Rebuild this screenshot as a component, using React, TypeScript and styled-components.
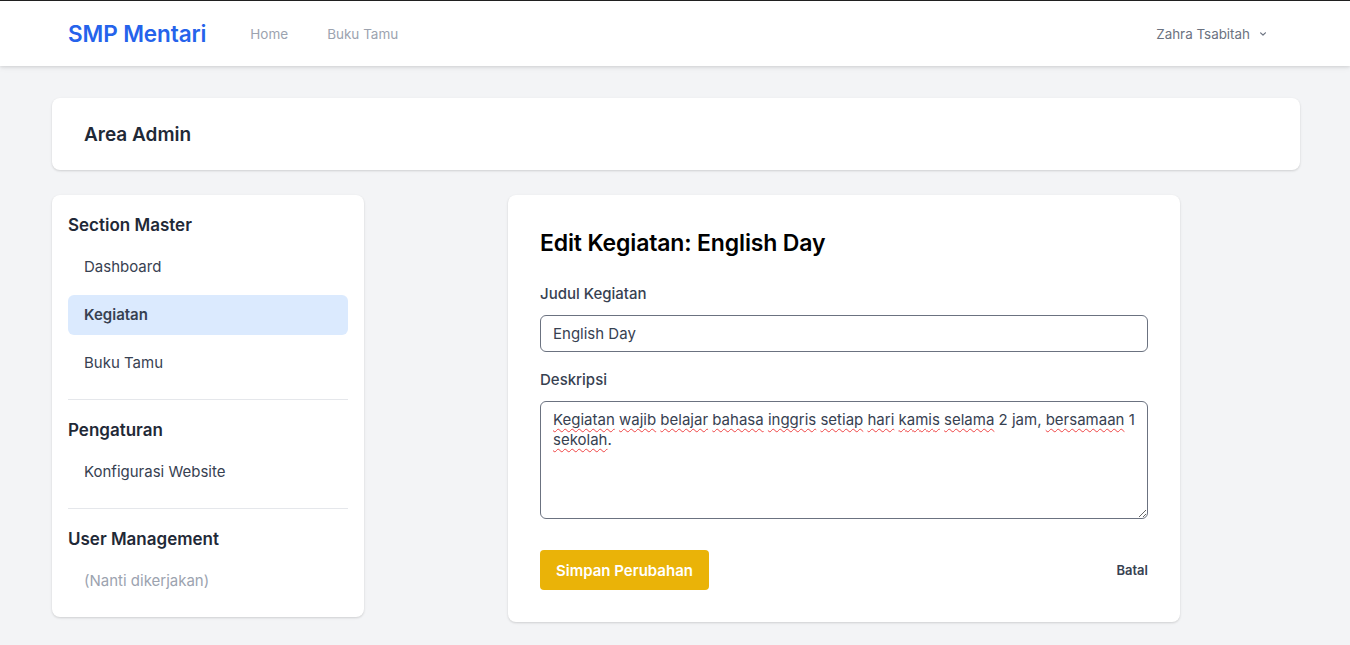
import React from "react";
import styled, { createGlobalStyle } from "styled-components";

const FONT = `"Inter", "Noto Sans", sans-serif`;

const Global = createGlobalStyle`
  html, body { margin: 0; padding: 0; }
  body {
    background: #f3f4f6;
    font-family: ${FONT};
    color: #111827;
    -webkit-font-smoothing: antialiased;
  }
  * { box-sizing: border-box; }
`;

const Page = styled.div`
  min-height: 645px;
  border-top: 1px solid #222;
  background: #f3f4f6;
`;

const Nav = styled.nav`
  height: 65px;
  background: #fff;
  box-shadow: 0 1px 3px rgba(0,0,0,0.1), 0 2px 6px rgba(0,0,0,0.06);
  position: relative;
`;

const NavInner = styled.div`
  max-width: 1280px;
  margin: 0 auto;
  height: 100%;
  padding: 0 32px 0 33px;
  display: flex;
  align-items: center;
`;

const Logo = styled.a`
  font-size: 22.5px;
  font-weight: 600;
  color: #2563eb;
  text-decoration: none;
  letter-spacing: -0.1px;
`;

const NavLinks = styled.div`
  display: flex;
  gap: 39px;
  margin-left: 44px;
`;

const NavLink = styled.a`
  font-size: 13.5px;
  color: #9ca3af;
  font-weight: 400;
  text-decoration: none;
`;

const UserMenu = styled.button`
  margin-left: auto;
  margin-right: 14px;
  display: flex;
  align-items: center;
  gap: 7px;
  background: none;
  border: 0;
  font-family: ${FONT};
  font-size: 13.4px;
  font-weight: 400;
  color: #6b7280;
  padding: 0;
`;

const Container = styled.main`
  max-width: 1280px;
  margin: 0 auto;
  padding: 32px 15px 24px 17px;
`;

const Card = styled.div`
  background: #fff;
  border-radius: 8px;
  box-shadow: 0 1px 3px rgba(0,0,0,0.1), 0 1px 2px rgba(0,0,0,0.06);
`;

const HeaderCard = styled(Card)`
  height: 72px;
  padding: 0 32px;
  display: flex;
  align-items: center;
`;

const PageTitle = styled.h2`
  margin: 0;
  font-size: 19px;
  font-weight: 600;
  color: #1f2937;
`;

const Layout = styled.div`
  display: grid;
  grid-template-columns: 312px 1fr;
  gap: 24px;
  margin-top: 25px;
  align-items: start;
`;

const Sidebar = styled(Card)`
  padding: 16px;
`;

const SectionTitle = styled.h3`
  margin: 0 0 8px;
  font-size: 17px;
  line-height: 28px;
  font-weight: 600;
  color: #1f2937;
`;

const MenuList = styled.div`
  display: flex;
  flex-direction: column;
  gap: 8px;
`;

const MenuItem = styled.a<{ $active?: boolean; $muted?: boolean }>`
  display: block;
  height: 40px;
  line-height: 40px;
  padding: 0 16px;
  border-radius: 6px;
  font-size: 15px;
  text-decoration: none;
  background: ${(p) => (p.$active ? "#dbeafe" : "transparent")};
  color: ${(p) => (p.$muted ? "#9ca3af" : "#374151")};
  font-weight: ${(p) => (p.$active ? 600 : 400)};
`;

const Divider = styled.hr`
  border: 0;
  border-top: 1px solid #e5e7eb;
  margin: 16px 0;
`;

const MainCol = styled.div`
  display: flex;
  justify-content: center;
`;

const FormCard = styled(Card)`
  width: 672px;
  padding: 32px;
`;

const FormTitle = styled.h1`
  margin: 0 0 25px;
  font-size: 23px;
  line-height: 32px;
  font-weight: 600;
  letter-spacing: -0.15px;
  color: #000;
`;

const Field = styled.div`
  display: flex;
  flex-direction: column;
  margin-bottom: 18px;
`;

const Label = styled.label`
  font-size: 15px;
  line-height: 20px;
  font-weight: 500;
  color: #374151;
  margin-bottom: 11px;
`;

const Input = styled.input`
  height: 37px;
  width: 100%;
  border: 1px solid #6b7280;
  border-radius: 6px;
  padding: 0 12px;
  font-family: ${FONT};
  font-size: 15px;
  color: #374151;
  outline: none;
`;

const TextArea = styled.div`
  height: 118px;
  width: 100%;
  border: 1px solid #6b7280;
  border-radius: 6px;
  padding: 8px 12px;
  font-family: ${FONT};
  font-size: 15px;
  line-height: 20px;
  color: #374151;
  resize: vertical;
  overflow: auto;
  white-space: pre-wrap;
`;

const Typo = styled.span`
  text-decoration: underline wavy #ef4444;
  text-decoration-thickness: 1px;
  text-underline-offset: 3px;
`;

const Actions = styled.div`
  display: flex;
  align-items: center;
  justify-content: space-between;
  margin-top: 31px;
`;

const SaveButton = styled.button`
  height: 40px;
  padding: 0 16px;
  background: #eab308;
  color: #fff;
  border: 0;
  border-radius: 4px;
  font-family: ${FONT};
  font-size: 15px;
  font-weight: 600;
`;

const CancelLink = styled.a`
  font-size: 13px;
  font-weight: 600;
  color: #374151;
  text-decoration: none;
`;

const words: [string, boolean][] = [
  ["Kegiatan", true], [" ", false], ["wajib", true], [" ", false], ["belajar", true], [" ", false],
  ["bahasa", true], [" ", false], ["inggris", true], [" ", false], ["setiap", true], [" ", false],
  ["hari", true], [" ", false], ["kamis", true], [" ", false], ["selama", true], [" 2 jam, ", false],
  ["bersamaan", true], [" 1 ", false], ["sekolah", true], [".", false],
];

export default function App() {
  return (
    <Page>
      <Global />
      <Nav>
        <NavInner>
          <Logo>SMP Mentari</Logo>
          <NavLinks>
            <NavLink>Home</NavLink>
            <NavLink>Buku Tamu</NavLink>
          </NavLinks>
          <UserMenu>
            Zahra Tsabitah
            <svg width="12" height="12" viewBox="0 0 20 20" fill="currentColor">
              <path fillRule="evenodd" d="M5.293 7.293a1 1 0 011.414 0L10 10.586l3.293-3.293a1 1 0 111.414 1.414l-4 4a1 1 0 01-1.414 0l-4-4a1 1 0 010-1.414z" clipRule="evenodd" />
            </svg>
          </UserMenu>
        </NavInner>
      </Nav>
      <Container>
        <HeaderCard>
          <PageTitle>Area Admin</PageTitle>
        </HeaderCard>
        <Layout>
          <Sidebar>
            <SectionTitle>Section Master</SectionTitle>
            <MenuList>
              <MenuItem>Dashboard</MenuItem>
              <MenuItem $active>Kegiatan</MenuItem>
              <MenuItem>Buku Tamu</MenuItem>
            </MenuList>
            <Divider />
            <SectionTitle>Pengaturan</SectionTitle>
            <MenuList>
              <MenuItem>Konfigurasi Website</MenuItem>
            </MenuList>
            <Divider />
            <SectionTitle>User Management</SectionTitle>
            <MenuList>
              <MenuItem $muted>(Nanti dikerjakan)</MenuItem>
            </MenuList>
          </Sidebar>
          <MainCol>
            <FormCard>
              <FormTitle>Edit Kegiatan: English Day</FormTitle>
              <Field>
                <Label>Judul Kegiatan</Label>
                <Input defaultValue="English Day" />
              </Field>
              <Field>
                <Label>Deskripsi</Label>
                <TextArea role="textbox">
                  {words.map(([w, t], i) => (t ? <Typo key={i}>{w}</Typo> : <React.Fragment key={i}>{w}</React.Fragment>))}
                </TextArea>
              </Field>
              <Actions>
                <SaveButton>Simpan Perubahan</SaveButton>
                <CancelLink>Batal</CancelLink>
              </Actions>
            </FormCard>
          </MainCol>
        </Layout>
      </Container>
    </Page>
  );
}
